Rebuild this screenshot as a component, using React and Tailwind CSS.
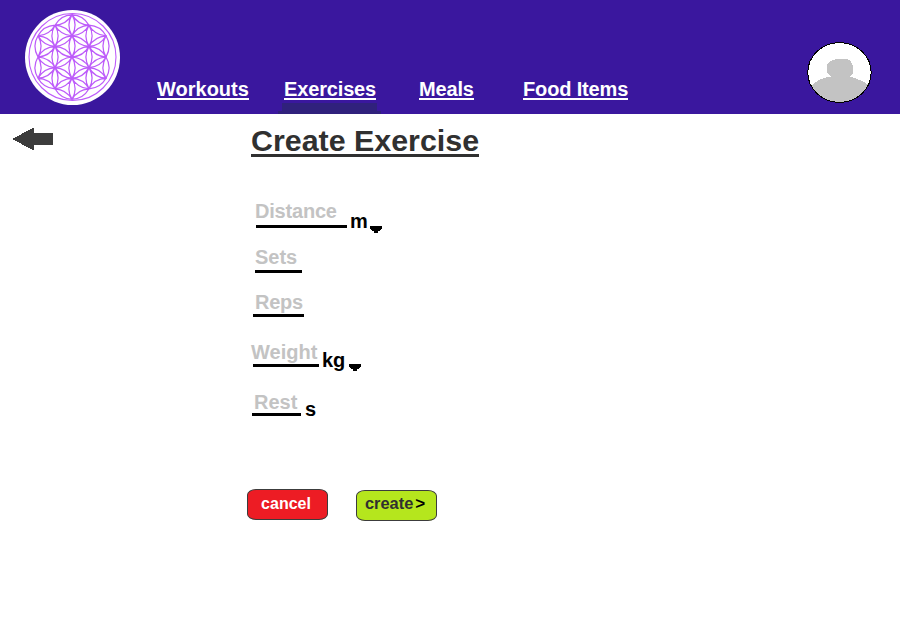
import React from "react";

const FONT = "font-['Liberation_Sans',Arial,sans-serif]";

// Nineteen lattice points of the flower, in columns from left to right.
const COLUMNS = [
  [-2, [-1, 0, 1]],
  [-1, [-1.5, -0.5, 0.5, 1.5]],
  [0, [-2, -1, 0, 1, 2]],
  [1, [-1.5, -0.5, 0.5, 1.5]],
  [2, [-1, 0, 1]],
];
const NODES = COLUMNS.flatMap(([c, rows]) => rows.map((r) => ({ c, r })));
const petals = [];
NODES.forEach((a, i) =>
  NODES.slice(i + 1).forEach((b) => {
    const dc = Math.abs(a.c - b.c);
    const dr = Math.abs(a.r - b.r);
    if ((dc === 0 && dr === 1) || (dc === 1 && dr === 0.5)) {
      const p = `${47 + a.c * 17} ${47 + a.r * 21.2}`;
      const q = `${47 + b.c * 17} ${47 + b.r * 21.2}`;
      petals.push(`M${p}A21 21 0 0 1 ${q}A21 21 0 0 1 ${p}`);
    }
  })
);

function Logo() {
  return (
    <svg className="block h-[95px] w-[95px]" viewBox="0 0 95 95">
      <circle cx="47.5" cy="47.5" r="47.5" fill="#fff" />
      <g fill="none" stroke="#bd5cfa">
        <circle cx="47.5" cy="47" r="43.5" strokeWidth="1.1" />
        <path d={petals.join("")} strokeWidth="1.25" />
      </g>
    </svg>
  );
}

function Avatar() {
  return (
    <svg className="block h-[62px] w-[66px]" viewBox="0 0 66 62" shapeRendering="crispEdges">
      <clipPath id="face">
        <ellipse cx="32.5" cy="30.5" rx="31.7" ry="29.9" />
      </clipPath>
      <ellipse cx="32.5" cy="30.5" rx="31.7" ry="29.9" fill="#fff" />
      <g clipPath="url(#face)" fill="#c3c3c3">
        <path d="M20 30V22L23 19L29 17H40L44 19L45 23L46 24V31L43 35H24Z" />
        <path d="M0 49L5 43L12 38L20 35L28 34H38L48 36L57 40L66 46V62H0Z" />
      </g>
      <ellipse cx="32.5" cy="30.5" rx="31.7" ry="29.9" fill="none" stroke="#000" />
    </svg>
  );
}

function NavLink({ className, children }) {
  return (
    <a className={`box-content block h-[20px] shrink-0 border-b-2 border-white text-[20px] leading-[23px] font-bold whitespace-nowrap text-white ${className}`}>
      {children}
    </a>
  );
}

function Caret({ className }) {
  return (
    <svg className={`block h-[7px] w-[12px] ${className}`} viewBox="0 0 12 7" shapeRendering="crispEdges">
      <path d="M0 0H12V3H10V5H8V7H4V5H2V3H0Z" />
      <path d="M1 3H11V4H10V5H2V4H1Z" />
    </svg>
  );
}

function Field({ className, box, label, unit, unitClass, caretClass }) {
  return (
    <div className={`flex items-start ${className}`}>
      <div className={`h-[29px] shrink-0 border-b-3 border-black text-[20px] leading-[23px] font-bold whitespace-nowrap text-[#c3c3c3] ${box}`}>
        {label}
      </div>
      {unit && <span className={`mt-[11px] text-[20px] leading-[23px] font-bold text-black ${unitClass}`}>{unit}</span>}
      {caretClass && <Caret className={caretClass} />}
    </div>
  );
}

export default function App() {
  return (
    <div className={`h-[626px] w-[900px] overflow-hidden bg-white ${FONT}`}>
      <header className="flex h-[114px] items-start bg-[#3a179e]">
        <div className="mt-[10px] ml-[25px]"><Logo /></div>
        <nav className="ml-[37px] flex flex-1 pt-[78px]">
          <NavLink className="w-[92px]">Workouts</NavLink>
          <div className="ml-[35px] w-[92px]">
            <NavLink className="w-[92px] tracking-[-0.15px]">Exercises</NavLink>
            <svg className="mt-[3px] -ml-[6px] block h-[11px] w-[103px]" viewBox="0 0 103 11" shapeRendering="crispEdges">
              <path d="M4 0H99V8H103V11H0V8H4Z" fill="#30217c" />
            </svg>
          </div>
          <NavLink className="ml-[43px] w-[55px] tracking-[-0.15px]">Meals</NavLink>
          <NavLink className="ml-[49px] w-[105px] tracking-[-0.15px]">Food Items</NavLink>
        </nav>
        <div className="mt-[42px] mr-[27px]"><Avatar /></div>
      </header>
      <main className="flex items-start">
        <svg className="mt-[14px] ml-[12px] block h-[22px] w-[41px]" viewBox="0 0 41 22" shapeRendering="crispEdges">
          <path d="M0 11L21 0H22V5H41V17H22V22H21Z" fill="#3c3c3c" />
        </svg>
        <div className="ml-[194px]">
          <h1 className="mt-[9px] ml-[4px] h-[34px] w-[228px] border-b-3 border-[#303030] text-[30.4px] leading-[35px] font-bold whitespace-nowrap text-[#303030]">
            Create Exercise
          </h1>
          <Field className="mt-[42px] ml-[9px]" box="w-[91px] -indent-px pt-px tracking-[-0.2px]" label="Distance" unit="m" unitClass="ml-[3px]" caretClass="ml-[2px] mt-[27px]" />
          <Field className="mt-[11px] ml-[8px]" box="w-[47px] pt-[2px]" label="Sets" />
          <Field className="mt-[15px] ml-[6px]" box="w-[51px] indent-[2px] pt-[3px] tracking-[-0.3px]" label="Reps" />
          <Field className="mt-[21px] ml-[6px]" box="w-[66px] -indent-[2px] pt-[3px]" label="Weight" unit="kg" unitClass="ml-[3px]" caretClass="ml-[4px] mt-[26px]" />
          <Field className="mt-[15px] ml-[5px]" box="w-[49px] indent-[2px] pt-[4px]" label="Rest" unit="s" unitClass="ml-[4px]" />
          <div className="mt-[68px] flex items-start">
            <button className="h-[31px] w-[81px] rounded-[9px/6px] border border-[#3c3c3c] bg-[#ed1c24] pr-[3px] pb-[2px] text-[16px] font-bold text-white">cancel</button>
            <button className="mt-px ml-[28px] flex h-[31px] w-[81px] items-start rounded-[9px/6px] border border-[#3c3c3c] bg-[#b5e61d] pt-[3px] pl-[8px] text-[16.4px] leading-[18px] font-bold text-[#303030]">
              create<span className="mt-px ml-[2px] text-[17px] text-black">&gt;</span>
            </button>
          </div>
        </div>
      </main>
    </div>
  );
}
